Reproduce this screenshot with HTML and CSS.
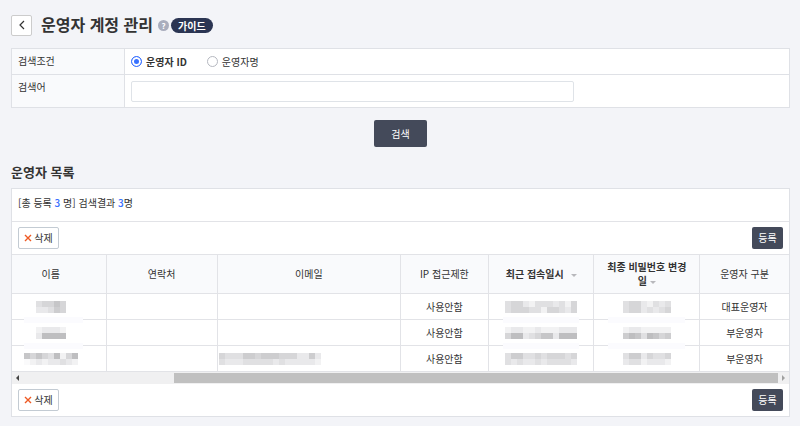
FILE: index.html
```html
<!DOCTYPE html>
<html lang="ko">
<head>
    <meta charset="UTF-8">
    <meta name="viewport" content="width=device-width, initial-scale=1.0">
    <title>운영자 계정 관리</title>
    <link rel="stylesheet" href="styles.css">
</head>
<body>
    <div class="page">
        <header class="page-header">
            <button type="button" class="back" aria-label="뒤로">
                <svg width="8" height="10" viewBox="0 0 8 10"><path d="M6 1 2 5l4 4" fill="none" stroke="#333" stroke-width="1.2"/></svg>
            </button>
            <h1>운영자 계정 관리</h1>
            <span class="help">?</span>
            <a href="#guide" class="guide">가이드</a>
        </header>

        <form>
            <div class="search">
                <div class="search-row">
                    <div class="search-label">검색조건</div>
                    <div class="search-field">
                        <label class="option selected"><input type="radio" name="type" checked>운영자 ID</label>
                        <label class="option"><input type="radio" name="type">운영자명</label>
                    </div>
                </div>
                <div class="search-row keyword">
                    <label class="search-label" for="keyword">검색어</label>
                    <div class="search-field"><input type="text" id="keyword" name="keyword"></div>
                </div>
            </div>
            <button type="submit" class="submit">검색</button>
        </form>

        <h2>운영자 목록</h2>
        <div class="panel">
            <p class="count">[총 등록 <b>3</b> 명] 검색결과 <b>3</b>명</p>
            <div class="toolbar">
                <button type="button" class="delete">
                    <svg width="8" height="8" viewBox="0 0 8 8"><path d="M1 1l6 6M7 1 1 7" stroke="#ee5a24" stroke-width="1.4"/></svg>삭제
                </button>
                <button type="button" class="add">등록</button>
            </div>
            <table>
                <colgroup>
                    <col class="col-name"><col class="col-phone"><col class="col-email"><col class="col-ip"><col class="col-date"><col class="col-date"><col class="col-role">
                </colgroup>
                <thead>
                    <tr>
                        <th class="name">이름</th>
                        <th>연락처</th>
                        <th>이메일</th>
                        <th>IP 접근제한</th>
                        <th class="sortable">최근 접속일시 <i class="arrow wide"></i></th>
                        <th class="sortable">최종 비밀번호 변경일 <i class="arrow"></i></th>
                        <th>운영자 구분</th>
                    </tr>
                </thead>
                <tbody>
                    <tr>
                        <td class="name masked"><span data-mask="34464/22354"></span></td>
                        <td></td>
                        <td></td>
                        <td>사용안함</td>
                        <td class="masked wide"><span data-mask="344213332314/344433144324"></span></td>
                        <td class="masked wide"><span data-mask="34421323/34423234"></span></td>
                        <td>대표운영자</td>
                    </tr>
                    <tr>
                        <td class="name masked"><span data-mask="12221/27777"></span></td>
                        <td></td>
                        <td></td>
                        <td>사용안함</td>
                        <td class="masked wide"><span data-mask="122112111222/477234662777"></span></td>
                        <td class="masked wide"><span data-mask="12211111/57637645"></span></td>
                        <td>부운영자</td>
                    </tr>
                    <tr>
                        <td class="name"><span data-mask="646437147/012122321"></span></td>
                        <td></td>
                        <td class="email"><span data-mask="43335545554442252/32223333323222221"></span></td>
                        <td>사용안함</td>
                        <td><span data-mask="355334344434/323223233332"></span></td>
                        <td><span data-mask="35524334/23312221"></span></td>
                        <td>부운영자</td>
                    </tr>
                </tbody>
            </table>
            <div class="scroll">
                <i class="scroll-left"></i>
                <div class="scroll-track"><div class="scroll-thumb"></div></div>
                <i class="scroll-right"></i>
            </div>
            <div class="toolbar">
                <button type="button" class="delete">
                    <svg width="8" height="8" viewBox="0 0 8 8"><path d="M1 1l6 6M7 1 1 7" stroke="#ee5a24" stroke-width="1.4"/></svg>삭제
                </button>
                <button type="button" class="add">등록</button>
            </div>
        </div>
    </div>

    <script>
        // one digit per block, rows split by "/", higher is darker
        var shades = ['#fafafb', '#f2f2f3', '#e9e9eb', '#e0e0e2', '#d6d6d8', '#cdcdcf', '#c6c6c8', '#bebec0'];
        document.querySelectorAll('[data-mask]').forEach(function(el) {
            var rows = el.dataset.mask.split('/');
            var width = rows[0].length * 6;
            var svg = '<svg class="mask" width="' + width + '" height="12">';
            rows.forEach(function(row, y) {
                row.split('').forEach(function(n, x) {
                    svg += '<rect x="' + x * 6 + '" y="' + y * 6 + '" width="6" height="6" fill="' + shades[n] + '"/>';
                });
            });
            el.innerHTML = svg + '</svg>';
        });
    </script>
</body>
</html>
```
FILE: styles.css
```css
* {
    box-sizing: border-box;
}

body {
    margin: 0;
    background-color: #f3f4f8;
    color: #333;
    font-family: "Noto Sans CJK KR", sans-serif;
    font-size: 10px;
    line-height: 14px;
}

button,
input {
    font: inherit;
    margin: 0;
}

button {
    display: flex;
    align-items: center;
    justify-content: center;
    border-radius: 2px;
    padding: 0;
}

.page {
    padding: 14px 10px 10px 11px;
}

.page-header {
    display: flex;
    align-items: center;
    height: 22px;
    margin-bottom: 12px;
}

.back {
    width: 21px;
    height: 21px;
    background-color: #fff;
    border: 1px solid #ccc;
}

h1 {
    margin: 0 5px 0 9px;
    font-size: 16px;
    line-height: 20px;
    padding-bottom: 2px;
    font-weight: bold;
}

.help {
    width: 11px;
    height: 11px;
    border-radius: 50%;
    background-color: #a9adbd;
    color: #fff;
    font-size: 8px;
    line-height: 11px;
    font-weight: bold;
    text-align: center;
}

.guide {
    margin-left: 2px;
    padding: 0 7px;
    border-radius: 8px;
    background-color: #2b3553;
    color: #fff;
    font-weight: bold;
    line-height: 15px;
    text-decoration: none;
}

.search {
    border: 1px solid #dfe1e6;
    background-color: #fff;
}

.search-row {
    display: flex;
    min-height: 25px;
}

.keyword {
    min-height: 33px;
    border-top: 1px solid #dfe1e6;
}

.search-label {
    width: 113px;
    padding: 5px 6px;
    background-color: #f9fafc;
    border-right: 1px solid #dfe1e6;
}

.search-field {
    display: flex;
    flex: 1;
    align-items: center;
    padding: 0 6px;
}

.option {
    display: flex;
    align-items: center;
    gap: 4px;
    margin-right: 20px;
}

.selected {
    font-weight: bold;
}

input[type="radio"] {
    appearance: none;
    width: 11px;
    height: 11px;
    border: 1px solid #b5b8c0;
    border-radius: 50%;
    background-color: #fff;
}

input[type="radio"]:checked {
    border-color: #3971ff;
    background-color: #3971ff;
    box-shadow: inset 0 0 0 2px #fff;
}

input[type="text"] {
    width: 68%;
    max-width: 443px;
    height: 21px;
    border: 1px solid #dfe3e8;
    border-radius: 2px;
}

.submit {
    width: 53px;
    height: 27px;
    margin: 12px auto 0;
    border: 0;
    background-color: #444a5a;
    color: #fff;
}

h2 {
    margin: 15px 0 7px;
    font-size: 13px;
    line-height: 19px;
    font-weight: bold;
}

.panel {
    border: 1px solid #dfe1e6;
    background-color: #fff;
}

.count {
    margin: 0;
    padding: 7px 6px 11px;
    border-bottom: 1px solid #e2e3e7;
}

.count b {
    color: #3971ff;
    font-weight: 500;
}

.toolbar {
    display: flex;
    justify-content: space-between;
    padding: 5px 6px;
}

.delete {
    gap: 2px;
    width: 41px;
    height: 22px;
    background-color: #fff;
    border: 1px solid #c3cbd3;
    color: #333;
}

.add {
    width: 31px;
    height: 22px;
    border: 0;
    background-color: #444a5a;
    color: #fff;
}

table {
    width: 100%;
    table-layout: fixed;
    border-collapse: collapse;
}

.col-name { width: 12.1%; }
.col-phone { width: 14.3%; }
.col-email { width: 23.6%; }
.col-ip { width: 11.3%; }
.col-date { width: 13.6%; }
.col-role { width: 11.5%; }

th,
td {
    padding: 0;
    border: 1px solid #e2e3e7;
    text-align: center;
}

th:first-child,
td:first-child {
    border-left: 0;
}

th:last-child,
td:last-child {
    border-right: 0;
}

th {
    height: 39px;
    background-color: #f9fafc;
    font-weight: normal;
}

td {
    position: relative;
    height: 26px;
}

.name {
    padding: 0 16px 0 0;
}

.email {
    padding-left: 1px;
    text-align: left;
}

.sortable {
    padding: 0 11px;
    font-weight: bold;
}

.arrow {
    display: inline-block;
    border: 3px solid transparent;
    border-top-color: #b8b8bc;
    border-bottom: 0;
    vertical-align: middle;
}

.arrow.wide {
    margin-left: 4px;
}

.mask {
    display: block;
    margin: 0 auto;
}

.email .mask {
    margin: 0;
}

/* pale strip left between the masked rows */
.masked::after {
    content: "";
    position: absolute;
    z-index: 1;
    left: 12px;
    right: 23px;
    bottom: -4px;
    height: 6px;
    background-color: #fbfbfe;
}

.masked.wide::after {
    left: 14px;
    right: 14px;
}

.scroll {
    display: flex;
    align-items: center;
    height: 12px;
    padding: 0 4px;
    background-color: #f0f0f1;
}

.scroll-left,
.scroll-right {
    border: 3px solid transparent;
}

.scroll-left {
    border-right-color: #444;
    border-left: 0;
}

.scroll-right {
    border-left-color: #a0a0a0;
    border-right: 0;
}

.scroll-track {
    flex: 1;
    padding: 0 4px;
}

.scroll-thumb {
    width: 80%;
    height: 10px;
    margin-left: auto;
    background-color: #c0c0c0;
}
```
